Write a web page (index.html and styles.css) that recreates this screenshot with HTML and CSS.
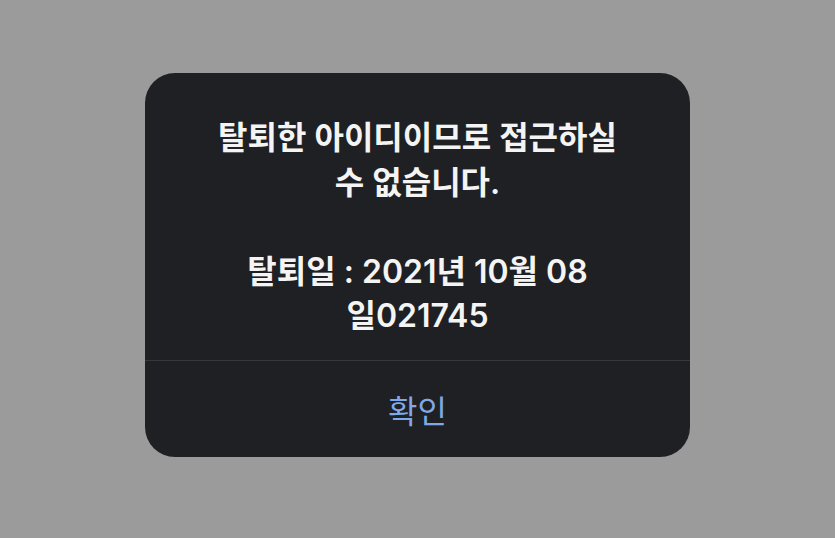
FILE: index.html
```html
<!DOCTYPE html>
<html lang="ko">

<head>
    <meta charset="UTF-8">
    <meta name="viewport" content="width=device-width, initial-scale=1.0">
    <title>탈퇴 안내</title>
    <link rel="stylesheet" href="styles.css">
</head>

<body>
    <!-- Alert -->
    <div class="alert">
        <div class="alert-message">
            <p>탈퇴한 아이디이므로 접근하실<br>수 없습니다.</p>
            <p>탈퇴일 : 2021년 10월 08<br>일021745</p>
        </div>
        <button class="alert-btn" type="button">확인</button>
    </div>
</body>

</html>
```

FILE: styles.css
```css
body {
    margin: 0;
    width: 835px;
    height: 538px;
    background-color: #9b9b9b;
    font-family: Inter, "Noto Sans CJK KR", sans-serif;
    display: flex;
    justify-content: center;
    align-items: flex-start;
}

.alert {
    margin-top: 73px;
    width: 545px;
    background-color: #1f2023;
    border-radius: 30px;
    overflow: hidden;
}

.alert-message {
    padding: 43px 30px 21px;
    border-bottom: 1px solid #38383b;
    color: #f4f4f4;
    text-align: center;
    font-size: 32px;
    font-weight: 600;
    line-height: 44.5px;
}

.alert-message p {
    margin: 0 0 44.5px;
}

.alert-message p:last-child {
    margin-bottom: 0;
}

.alert-btn {
    display: block;
    width: 100%;
    height: 96px;
    border: none;
    background: none;
    color: #7fa9e6;
    font-family: inherit;
    font-size: 32px;
    font-weight: 400;
    cursor: pointer;
}
```
